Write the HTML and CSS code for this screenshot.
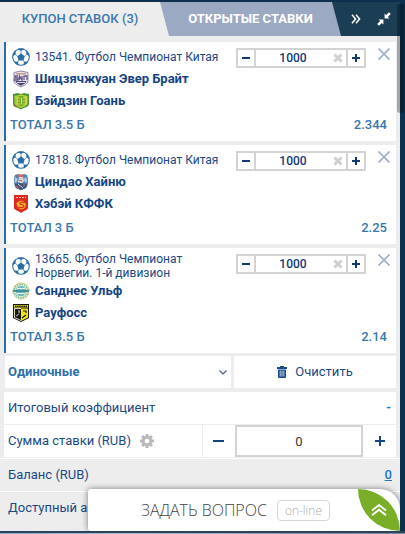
FILE: index.html
```html
<!DOCTYPE html>
<html lang="ru">
<head>
<meta charset="utf-8">
<meta name="viewport" content="width=device-width, initial-scale=1">
<title>Купон ставок</title>
<link rel="stylesheet" href="styles.css">
</head>
<body>
<svg class="sprite" aria-hidden="true">
  <symbol id="ball" viewBox="0 0 18 18">
    <circle cx="9" cy="9" r="8.3" fill="#fff" stroke="#2a6ca8" stroke-width="1.1"/>
    <path fill="#2a6ca8" d="M9 5.400l3.800 2.800-1.400 4.200H6.600L5.200 8.200zM5.400 1.100L9 3l3.600-1.900L11.500.6h-5zM.6 8.600l2.900-2.400.4-3.600L1.500 5zM17.400 8.600l-2.900-2.400-.4-3.600L16.500 5zM2.300 13.500l3.700.2.700 3.600-2.500-1.200zM15.700 13.500l-3.700.2-.7 3.600 2.500-1.200z"/>
    <path stroke="#2a6ca8" stroke-width=".7" d="M9 2.500v3.500M3 6l2.500 2.200M15 6l-2.500 2.200M6.800 12.200l-1 1.800M11.200 12.200l1 1.800"/>
  </symbol>
  <symbol id="cross" viewBox="0 0 12 12"><path d="M.5.5l11 11M11.500.5l-11 11" stroke="#9fb0ca" stroke-width="1.700"/></symbol>
  <symbol id="clear" viewBox="0 0 10 10"><path d="M1.500 1.500l7 7M8.500 1.500l-7 7" stroke="#d0d0d0" stroke-width="3"/></symbol>
</svg>
<div class="page">
  <main class="panel">
    <nav class="tabs">
      <button class="tab tab-active" type="button">КУПОН СТАВОК (3)</button>
      <button class="tab tab-open" type="button">ОТКРЫТЫЕ СТАВКИ</button>
      <div class="tools">
        <button class="tool" type="button" aria-label="Вперёд"><svg width="10" height="10" viewBox="0 0 10 10" fill="none" stroke="#fff" stroke-width="1.500"><path d="M1 .8L4.600 5 1 9.200M5 .8L8.600 5 5 9.200"/></svg></button>
        <button class="tool" type="button" aria-label="Свернуть"><svg width="14" height="14" viewBox="0 0 14 14" fill="#fff"><path d="M7.600 1.600l1.500 1.500L12 .2 13.800 2l-2.900 2.900 1.500 1.500H7.600zM6.400 12.400l-1.500-1.500L2 13.800.2 12l2.900-2.900-1.500-1.500h4.800z"/></svg></button>
      </div>
    </nav>

    <div class="bets">
      <article class="bet">
        <div class="bet-head">
          <svg class="badge"><use href="#ball"/></svg>
          <span class="event">13541. Футбол Чемпионат Китая</span>
          <div class="stepper">
            <button type="button" aria-label="Меньше"><svg width="8" height="8"><path d="M0 3h8v2H0z"/></svg></button>
            <input type="text" value="1000" aria-label="Сумма ставки 13541">
            <button class="clear" type="button" aria-label="Стереть"><svg width="10" height="10"><use href="#clear"/></svg></button>
            <button type="button" aria-label="Больше"><svg width="8" height="8"><path d="M0 3h3V0h2v3h3v2H5v3H3V5H0z"/></svg></button>
          </div>
          <button class="remove" type="button" aria-label="Удалить"><svg width="12" height="12"><use href="#cross"/></svg></button>
        </div>
        <div class="team">
          <svg class="badge" viewBox="0 0 18 18"><path fill="#e9e6ea" stroke="#8d87a4" d="M2 2.500L9 1l7 1.500v8.500c0 3-4 4.500-7 6-3-1.500-7-3-7-6z"/><path fill="#4c4277" d="M3.500 11h11c-.5 2.500-3 3.500-5.500 4.800-2.500-1.300-5-2.300-5.500-4.800z"/><path fill="#c79a8b" d="M4 3h10v1.500H4z"/><path fill="none" stroke="#66598a" stroke-width="1.300" d="M6 6H3v2h3v2H1.500M7.500 10V6L10 10V6M12 10V6h3v4"/><path stroke="#ded8e2" d="M5 12.500h8"/></svg>
          <span>Шицзячжуан Эвер Брайт</span>
        </div>
        <div class="team">
          <svg class="badge" viewBox="0 0 18 18"><path fill="#4f963b" d="M1 2l5-1 3 1 3-1 5 1v10c0 3-4 3-8 5.500C5 15 1 15 1 12z"/><path fill="#b6cf35" d="M2.500 4L9 2.500 15.500 4v7c-1 3-4 4-6.500 5-2.500-1-5.500-2-6.500-5z"/><ellipse cx="9" cy="9" rx="5.500" ry="5" fill="#6ba62b"/><path fill="none" stroke="#e4e354" stroke-width="1.200" d="M8 6H5v6h3M5 9h3M9.500 5.500v7M11 6h3v6h-3M11 9h3"/><path stroke="#d94e2a" d="M2 14h3"/></svg>
          <span>Бэйдзин Гоань</span>
        </div>
        <div class="pick"><span>ТОТАЛ 3.5 Б</span><span>2.344</span></div>
      </article>

      <article class="bet">
        <div class="bet-head">
          <svg class="badge"><use href="#ball"/></svg>
          <span class="event">17818. Футбол Чемпионат Китая</span>
          <div class="stepper">
            <button type="button" aria-label="Меньше"><svg width="8" height="8"><path d="M0 3h8v2H0z"/></svg></button>
            <input type="text" value="1000" aria-label="Сумма ставки 17818">
            <button class="clear" type="button" aria-label="Стереть"><svg width="10" height="10"><use href="#clear"/></svg></button>
            <button type="button" aria-label="Больше"><svg width="8" height="8"><path d="M0 3h3V0h2v3h3v2H5v3H3V5H0z"/></svg></button>
          </div>
          <button class="remove" type="button" aria-label="Удалить"><svg width="12" height="12"><use href="#cross"/></svg></button>
        </div>
        <div class="team">
          <svg class="badge" viewBox="0 0 18 18"><path fill="#5383b5" d="M3 2l3-1 3 1 3-1 3 1c2 5 1 11-1 13l-5 2-5-2C2 13 1 7 3 2z"/><path fill="#aac9df" d="M3 4l3 2-2 4-1.500-1zM14 4l1.500 4-2 2-2-4z"/><path fill="#c96a69" d="M6 1.500h5L12 4H6z"/><path fill="#d8d3d0" d="M7 4h4l1 4-2 3-4-2z"/><path fill="#39537a" d="M3 11l5-1 7 1-1 4-5 2-5-2z"/><path fill="none" stroke="#bb6d67" stroke-width="1.200" d="M7 7l3 1M4 13l3 2M12 11v3"/><path stroke="#d2d6dc" d="M6 11l5 4"/></svg>
          <span>Циндао Хайню</span>
        </div>
        <div class="team">
          <svg class="badge" viewBox="0 0 18 18"><path fill="#dc2a20" d="M2 0h14v13c0 2-5 3-7 5-2-2-7-3-7-5z"/><path stroke="#f5b79d" stroke-dasharray="2 1" d="M4 2.500h10"/><circle cx="9.500" cy="10" r="4.300" fill="#f5b52d"/><path fill="none" stroke="#dc2a20" stroke-width="1.100" d="M13 7.500c-3-1-6 0-5 1.500s4 0 4 2-3 2-6 1"/><path fill="#f5b52d" d="M4 9l3-3-1 4z"/></svg>
          <span>Хэбэй КФФК</span>
        </div>
        <div class="pick"><span>ТОТАЛ 3 Б</span><span>2.25</span></div>
      </article>

      <article class="bet">
        <div class="bet-head">
          <svg class="badge"><use href="#ball"/></svg>
          <span class="event">13665. Футбол Чемпионат Норвегии. 1-й дивизион</span>
          <div class="stepper">
            <button type="button" aria-label="Меньше"><svg width="8" height="8"><path d="M0 3h8v2H0z"/></svg></button>
            <input type="text" value="1000" aria-label="Сумма ставки 13665">
            <button class="clear" type="button" aria-label="Стереть"><svg width="10" height="10"><use href="#clear"/></svg></button>
            <button type="button" aria-label="Больше"><svg width="8" height="8"><path d="M0 3h3V0h2v3h3v2H5v3H3V5H0z"/></svg></button>
          </div>
          <button class="remove" type="button" aria-label="Удалить"><svg width="12" height="12"><use href="#cross"/></svg></button>
        </div>
        <div class="team">
          <svg class="badge" viewBox="0 0 18 18"><circle cx="9" cy="9" r="8.300" fill="#f3f2cf" stroke="#dcd596"/><circle cx="9" cy="9" r="6.800" fill="none" stroke="#65b5a0" stroke-width="1.600" stroke-dasharray="1.500 1"/><circle cx="9" cy="9" r="5.200" fill="#71b9c0"/><path stroke="#e8f1dd" d="M5 6.500h8M5 11.500h8"/><path stroke="#398997" stroke-width="1.800" d="M1 9h16"/></svg>
          <span>Санднес Ульф</span>
        </div>
        <div class="team">
          <svg class="badge" viewBox="0 0 18 18"><path fill="#171713" d="M1 0h16v14l-8 4-8-4z"/><path fill="#f2e321" d="M2 1h14v2.500H2zM9 4.500h7v9L9 17z"/><path stroke="#171713" stroke-dasharray="1.500 .6" stroke-width="1.500" d="M3 2.200h12"/><path stroke="#ddd9b0" fill="none" d="M2 4.500h7M2.500 5v8.500L9 16.500M7 6v3"/><path fill="none" stroke="#171713" stroke-width="1.200" d="M11 7h3v2M10 14l4-3"/><path stroke="#999" stroke-width="1.200" d="M4 12l3-2"/></svg>
          <span>Рауфосс</span>
        </div>
        <div class="pick"><span>ТОТАЛ 3.5 Б</span><span>2.14</span></div>
      </article>
    </div>

    <div class="actions">
      <div class="kind">
        <select aria-label="Тип ставки"><option>Одиночные</option></select>
        <svg class="chevron" width="8" height="5" viewBox="0 0 8 5" fill="none" stroke="#4c5f7d" stroke-width="1.200"><path d="M.5.500L4 4 7.500.5"/></svg>
      </div>
      <button class="wipe" type="button">
        <svg width="10" height="12" viewBox="0 0 10 12"><path fill="#1b4b87" d="M3 0h4v1h3v2H0V1h3zM1 3.500h8V11q0 1-1 1H2q-1 0-1-1z"/><path stroke="#fff" stroke-width=".7" d="M3.200 4.500v6M5 4.500v6M6.800 4.500v6"/></svg>
        Очистить
      </button>
    </div>

    <div class="totals">
      <div class="total"><span>Итоговый коэффициент</span><b class="dash">-</b></div>
      <div class="stake">
        <label for="sum">Сумма ставки (RUB)</label>
        <svg class="gear" width="14" height="14" viewBox="0 0 14 14"><g fill="#b9b9b9"><path d="M5.500 0h3v14h-3z"/><path d="M0 5.500h14v3H0z"/><path d="M5.500 0h3v14h-3z" transform="rotate(45 7 7)"/><path d="M5.500 0h3v14h-3z" transform="rotate(-45 7 7)"/><circle cx="7" cy="7" r="5.300"/></g><circle cx="7" cy="7" r="2.300" fill="#fff"/></svg>
        <button type="button" aria-label="Уменьшить"><svg width="11" height="10"><path d="M0 4h11v2H0z"/></svg></button>
        <input id="sum" type="text" value="0">
        <button type="button" aria-label="Увеличить"><svg width="10" height="10"><path d="M0 4h4V0h2v4h4v2H6v4H4V6H0z"/></svg></button>
      </div>
    </div>
    <div class="balance"><span>Баланс (RUB)</span><a href="#">0</a></div>
    <div class="balance"><span>Доступный аванс</span></div>
    <div class="scroll"></div>
  </main>
  <button class="chat" type="button">
    <span class="ask">ЗАДАТЬ ВОПРОС</span>
    <span class="online">on-line</span>
    <span class="leaf"><svg width="16" height="12" viewBox="0 0 16 12" fill="none" stroke="#fff" stroke-width="1.800"><path d="M1 6.500L8 1l7 5.500M1 11.200L8 5.700l7 5.500"/></svg></span>
  </button>
  <div class="strip"></div>
</div>
</body>
</html>
```
FILE: styles.css
```css
* { box-sizing: border-box; }
body {
  margin: 0;
  background: #0c304d;
  color: #1b4987;
  font: 13px/14px Roboto, "Noto Sans", sans-serif;
}
button, input, select { margin: 0; padding: 0; border: 0; border-radius: 0; background: none; font: inherit; color: inherit; }
button { display: flex; align-items: center; justify-content: center; }
svg { display: block; flex: none; }
.sprite { position: absolute; width: 0; height: 0; }
.page { position: relative; display: flex; flex-direction: column; padding-top: 2px; }
.panel { margin-right: 5px; background: #ededed; }

.tabs { display: flex; height: 34px; background: #ededed; }
.tab { font-size: 13px; font-weight: 500; }
.tab-active { flex: 160; color: #3a77ae; }
.tab-open {
  flex: 181;
  margin-right: -9px;
  z-index: 1;
  background: #9ba9c3;
  color: #fff;
  font-weight: 700;
  clip-path: polygon(0 0, calc(100% - 9px) 0, 100% 100%, 9px 100%);
}
.tools { flex: none; width: 68px; display: flex; align-items: center; justify-content: flex-end; gap: 16px; padding-right: 9px; background: #1b3e54; }

.bets { display: flex; flex-direction: column; gap: 4px; padding: 6px 4px 3px; }
.bet { padding: 4px 6px 3px 4px; border-left: 2px solid #2a6ca8; background: #fff; }
.bet-head { display: flex; align-items: center; min-height: 22px; }
.badge { width: 18px; height: 18px; margin: 0 5px 0 2px; }
.event { flex: 1; font-size: 12px; }
.team { display: flex; align-items: center; height: 22px; font-weight: 700; color: #164583; }
.pick { display: flex; align-items: center; justify-content: space-between; height: 26px; padding-right: 3px; color: #3a77ae; font-weight: 500; }
.stepper { align-self: flex-start; display: flex; width: 130px; height: 20px; margin: 2px 12px 0 0; border: 2px solid #d3d3d3; color: #113a75; fill: #113a75; }
.stepper button { width: 16px; }
.stepper button:first-child { border-right: 2px solid #d3d3d3; width: 18px; }
.stepper button:last-child { border-left: 2px solid #d3d3d3; width: 18px; }
.stepper input { flex: 1; min-width: 0; text-align: center; font-size: 12px; font-weight: 500; }
.remove { align-self: flex-start; margin-top: 2px; }

.actions { display: flex; gap: 3px; height: 32px; margin: 0 4px 4px 5px; }
.kind { position: relative; flex: 226; background: #fff; }
.kind select { width: 100%; height: 100%; padding-left: 3px; appearance: none; color: #2d70ad; font-weight: 700; }
.chevron { position: absolute; right: 4px; top: 14px; pointer-events: none; }
.wipe { flex: 162; gap: 8px; background: #fff; }

.totals { margin: 0 4px; background: #fff; }
.total { display: flex; align-items: center; justify-content: space-between; height: 33px; padding: 0 5px 0 4px; border-bottom: 1px solid #ededed; }
.total .dash { color: #1976c8; }
.stake { display: flex; align-items: center; height: 33px; padding-left: 4px; border-bottom: 1px solid #ededed; fill: #164583; }
.gear { margin: 0 auto 0 9px; }
.stake button { width: 33px; height: 100%; }
.stake input { width: 33%; height: 32px; border: 2px solid #d3d3d3; color: #333; text-align: center; }
.stake button:nth-of-type(1) { border-left: 1px solid #ededed; }
.balance { display: flex; align-items: center; justify-content: space-between; height: 33px; padding: 0 8px; border-top: 1px solid #fff; }
.balance + .balance { height: 40px; padding-bottom: 7px; }
.balance a { color: #1976c8; font-weight: 500; }

.scroll { position: absolute; top: 4px; right: 1px; width: 7px; height: 109px; border-radius: 3px; background: rgba(0, 0, 0, .3); z-index: 2; }
.chat {
  position: absolute;
  right: 5px;
  bottom: 4px;
  left: 88px;
  height: 42px;
  justify-content: flex-start;
  padding-left: 53px;
  gap: 10px;
  border-radius: 3px 20px 0 3px;
  background: #fff;
  box-shadow: 0 0 6px rgba(0, 0, 0, .5);
  color: #444;
  font: 300 16px/20px "Open Sans", "Noto Sans", sans-serif;
  clip-path: inset(-8px 0 0 -8px);
}
.online { padding: 0 7px; border: 1px solid #d6d6d6; border-radius: 4px; color: #aaa; font-size: 12px; line-height: 19px; }
.leaf { display: flex; align-items: center; justify-content: center; width: 42px; height: 42px; margin-left: auto; border-radius: 0 100% 0 100%; background: #7bae28; }
.strip { height: 4px; border-top: 2px solid #2d435c; background: linear-gradient(90deg, #8fadd0, #a5bbd5 30%, #7689a8); }
```
